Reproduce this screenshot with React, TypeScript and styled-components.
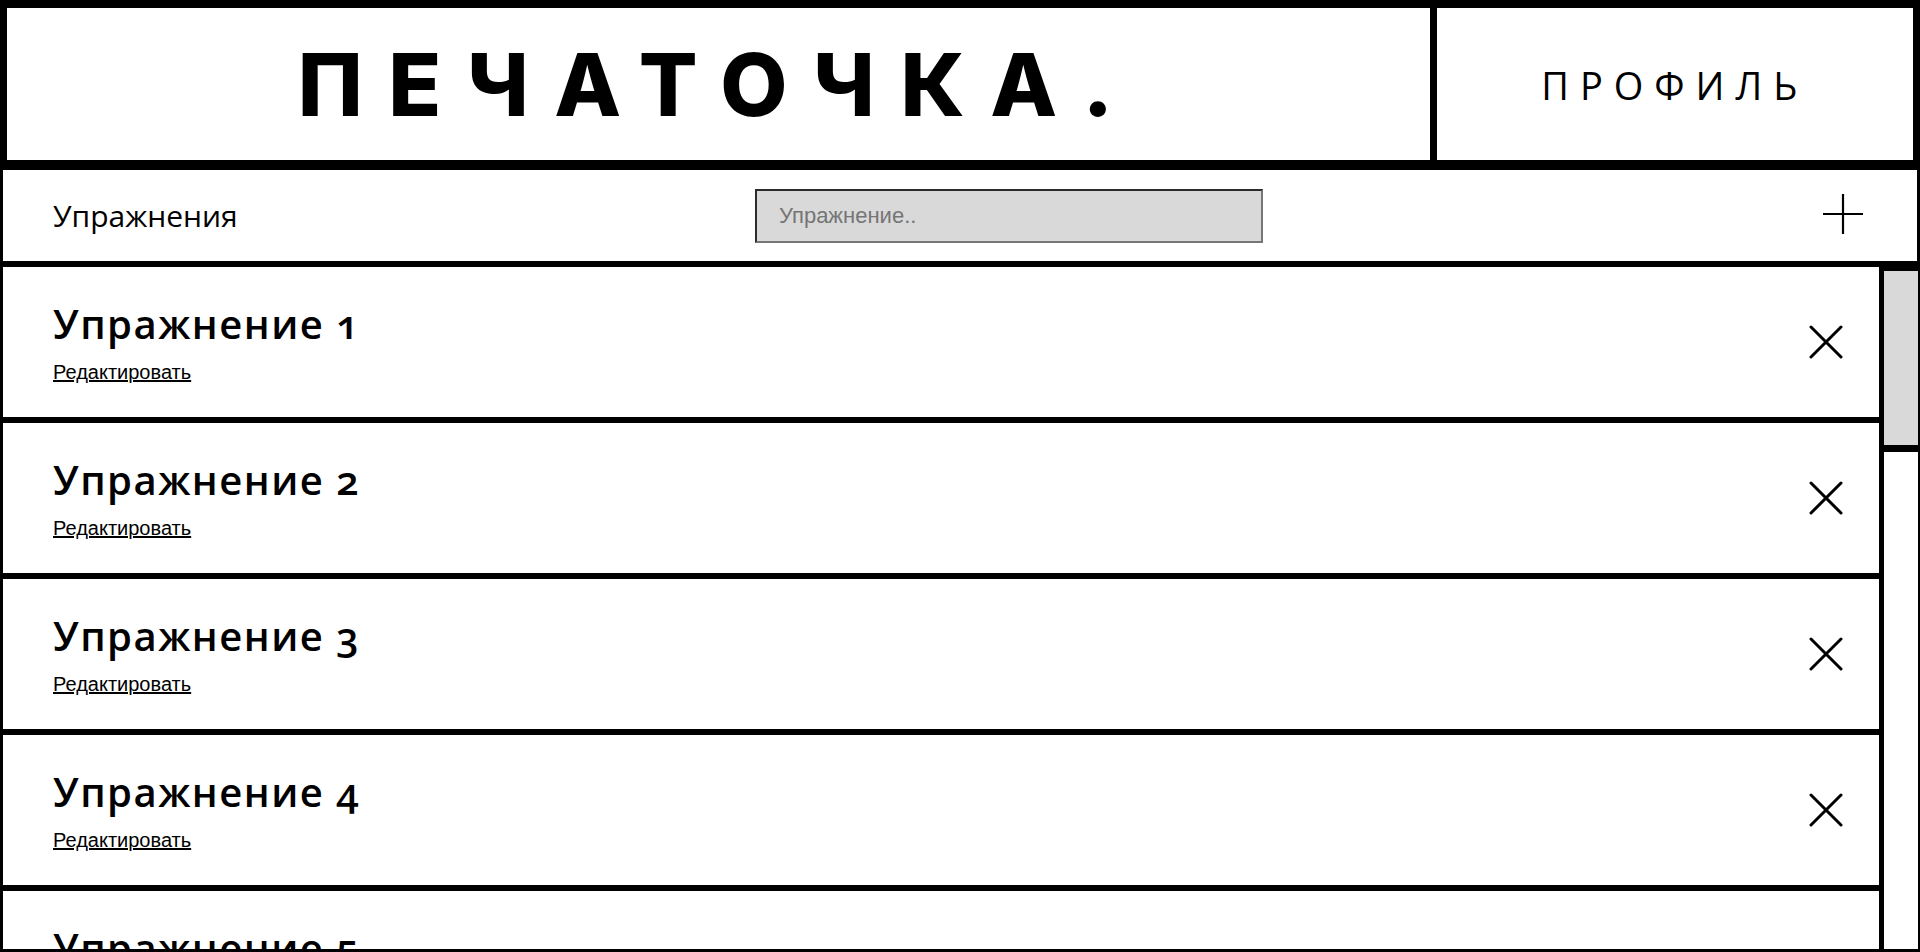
import React, { useEffect, useRef, useState } from "react";
import styled, { createGlobalStyle } from "styled-components";

const GlobalStyle = createGlobalStyle`
  html, body {
    margin: 0;
    padding: 0;
    height: 100%;
    background: #fff;
    overflow: hidden;
  }
  #root { height: 100%; }
  * { box-sizing: border-box; }
`;

const Page = styled.div`
  height: 100vh;
  display: flex;
  flex-direction: column;
  font-family: "Open Sans", "Noto Sans", sans-serif;
  color: #000;
`;

const Header = styled.header`
  flex: none;
  display: grid;
  grid-template-columns: 3fr 1fr;
  height: 167px;
  border: 7px solid #000;
  border-top-width: 8px;
`;

const LogoCell = styled.div`
  display: flex;
  align-items: center;
  justify-content: center;
  border-right: 7px solid #000;
`;

const Logo = styled.h1`
  margin: 0;
  font-family: Inter, "Open Sans", sans-serif;
  font-weight: 800;
  font-size: 87px;
  line-height: 1;
  letter-spacing: 25.5px;
`;

const ProfileCell = styled.a`
  display: flex;
  align-items: center;
  justify-content: center;
  padding-top: 2px;
  font-size: 38px;
  font-weight: 400;
  letter-spacing: 11px;
  color: #000;
  text-decoration: none;
`;

const Toolbar = styled.div`
  flex: none;
  height: 97px;
  display: flex;
  align-items: center;
  border: 3px solid #000;
  padding: 0 54px 0 50px;
`;

const ToolbarTitle = styled.div`
  flex: 0 0 702px;
  font-size: 30px;
  font-weight: 400;
`;

const Search = styled.input`
  flex: 0 0 508px;
  height: 54px;
  background: #d9d9d9;
  border-style: solid;
  border-width: 2px;
  border-color: #2b2b2b #767676 #767676 #2b2b2b;
  padding: 0 22px;
  font-family: "Liberation Sans", Arial, sans-serif;
  font-size: 22px;
  color: #000;
  outline: none;
  &::placeholder {
    color: #757575;
  }
`;

const Spacer = styled.div`
  flex: 1;
`;

const IconButton = styled.button<{ $shift?: number }>`
  display: flex;
  padding: 0;
  margin: 0 0 ${(p) => p.$shift ?? 0}px 0;
  border: 0;
  background: none;
  cursor: pointer;
  color: #000;
`;

const ListArea = styled.div`
  flex: 1;
  min-height: 0;
  display: flex;
  border-bottom: 3px solid #000;
`;

const List = styled.ul`
  flex: 1;
  min-width: 0;
  margin: 0;
  padding: 0;
  list-style: none;
  overflow-y: auto;
  scrollbar-width: none;
  &::-webkit-scrollbar {
    display: none;
  }
`;

const Rail = styled.div`
  flex: 0 0 38px;
  position: relative;
  background: #fff;
  border-left: 2px solid #000;
  border-right: 2px solid #000;
`;

const Thumb = styled.div`
  position: absolute;
  left: 0;
  right: 0;
  background: #d9d9d9;
  border-top: 7px solid #000;
  border-bottom: 7px solid #000;
`;

const Item = styled.li`
  height: 156px;
  display: flex;
  align-items: center;
  justify-content: space-between;
  border: 3px solid #000;
  padding: 0 36px 0 50px;
`;

const ItemText = styled.div`
  display: flex;
  flex-direction: column;
  gap: 12px;
`;

const ItemTitle = styled.h2`
  margin: 0;
  font-size: 40px;
  line-height: 48px;
  font-weight: 600;
  letter-spacing: 1.5px;
  font-variant-numeric: oldstyle-nums;
`;

const EditLink = styled.a`
  display: block;
  font-family: "Liberation Sans", Arial, sans-serif;
  font-size: 20px;
  line-height: 24px;
  color: #000;
  text-decoration: underline;
  cursor: pointer;
`;

const PlusIcon = () => (
  <svg width="40" height="40" viewBox="0 0 40 40" aria-hidden="true">
    <path d="M20 0V40M0 20H40" stroke="#000" strokeWidth="2.2" fill="none" />
  </svg>
);

const CloseIcon = () => (
  <svg width="34" height="34" viewBox="0 0 34 34" aria-hidden="true">
    <path
      d="M2 2L32 32M32 2L2 32"
      stroke="#000"
      strokeWidth="3"
      strokeLinecap="round"
      fill="none"
    />
  </svg>
);

const exercises = Array.from({ length: 16 }, (_, i) => `Упражнение ${i + 1}`);

export default function App() {
  const listRef = useRef<HTMLUListElement>(null);
  const railRef = useRef<HTMLDivElement>(null);
  const [thumb, setThumb] = useState({ top: 0, height: 188 });

  useEffect(() => {
    const list = listRef.current;
    const rail = railRef.current;
    if (!list || !rail) return;
    const update = () => {
      const railH = rail.clientHeight;
      const ratio = list.clientHeight / list.scrollHeight;
      const height = Math.max(30, railH * ratio);
      const maxScroll = list.scrollHeight - list.clientHeight;
      const top = maxScroll > 0 ? (list.scrollTop / maxScroll) * (railH - height) : 0;
      setThumb({ top, height });
    };
    update();
    list.addEventListener("scroll", update);
    window.addEventListener("resize", update);
    return () => {
      list.removeEventListener("scroll", update);
      window.removeEventListener("resize", update);
    };
  }, []);

  return (
    <>
      <GlobalStyle />
      <Page>
        <Header>
          <LogoCell>
            <Logo>ПЕЧАТОЧКА.</Logo>
          </LogoCell>
          <ProfileCell>ПРОФИЛЬ</ProfileCell>
        </Header>
        <Toolbar>
          <ToolbarTitle>Упражнения</ToolbarTitle>
          <Search placeholder="Упражнение.." />
          <Spacer />
          <IconButton $shift={4} aria-label="Добавить">
            <PlusIcon />
          </IconButton>
        </Toolbar>
        <ListArea>
          <List ref={listRef}>
            {exercises.map((name) => (
              <Item key={name}>
                <ItemText>
                  <ItemTitle>{name}</ItemTitle>
                  <EditLink>Редактировать</EditLink>
                </ItemText>
                <IconButton aria-label="Удалить">
                  <CloseIcon />
                </IconButton>
              </Item>
            ))}
          </List>
          <Rail ref={railRef}>
            <Thumb style={{ top: thumb.top, height: thumb.height }} />
          </Rail>
        </ListArea>
      </Page>
    </>
  );
}
